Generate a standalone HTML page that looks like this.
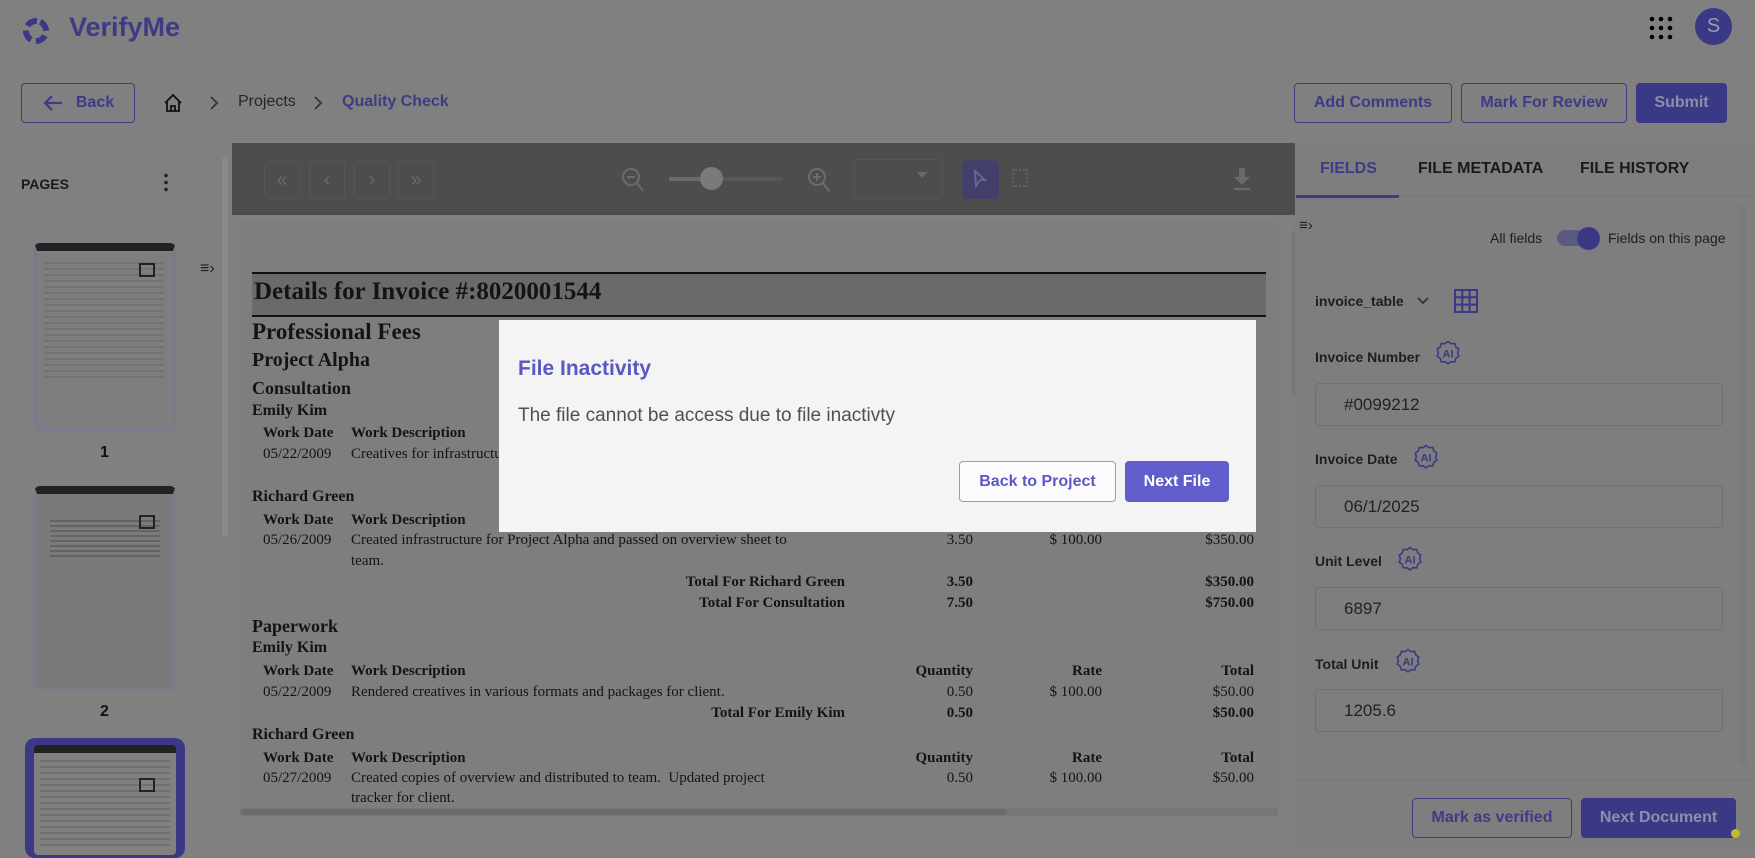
<!DOCTYPE html>
<html><head><meta charset="utf-8"><style>
*{box-sizing:border-box;margin:0;padding:0}
body{width:1755px;height:849px;overflow:hidden;background:#808080;font-family:"Liberation Sans",sans-serif;position:relative}
.a{position:absolute;white-space:nowrap}
.btn{position:absolute;border:1.5px solid #3f3d80;border-radius:4px;color:#3d3b86;font-weight:bold;font-size:16px;display:flex;align-items:center;justify-content:center}
.pbtn{background:#3b3985;color:#8e8eaa;border-color:#3b3985}
.s{font-family:"Liberation Serif",serif;color:#141414;position:absolute;white-space:nowrap;font-size:15px}
.b{font-weight:bold}
.r{text-align:right}
.tb{position:absolute;top:161px;width:36px;height:38px;border:1px solid #555;border-radius:4px;color:#6a6a6a;font-size:20px;display:flex;align-items:center;justify-content:center}
.lbl{position:absolute;font-size:14px;font-weight:bold;color:#1e1e1e;white-space:nowrap}
.inp{position:absolute;left:1315px;width:408px;height:43px;border:1px solid #707070;border-radius:4px;font-size:17px;color:#222;padding-left:28px;display:flex;align-items:center}
.ai{position:absolute;width:26px;height:26px}
</style></head><body>
<svg class="a" style="left:21px;top:15px" width="30" height="30" viewBox="0 0 30 30"><circle cx="15" cy="16" r="10" fill="none" stroke="#3b3985" stroke-width="6" stroke-dasharray="11 5" transform="rotate(-65 15 16)"/></svg>
<div class="a" style="left:69px;top:12px;font-size:27px;font-weight:bold;color:#3d3b86">VerifyMe</div>
<svg class="a" style="left:1649px;top:16px" width="24" height="24" viewBox="0 0 24 24" fill="#000"><circle cx="3" cy="3" r="2.3"/><circle cx="12" cy="3" r="2.3"/><circle cx="21" cy="3" r="2.3"/><circle cx="3" cy="12" r="2.3"/><circle cx="12" cy="12" r="2.3"/><circle cx="21" cy="12" r="2.3"/><circle cx="3" cy="21" r="2.3"/><circle cx="12" cy="21" r="2.3"/><circle cx="21" cy="21" r="2.3"/></svg>
<div class="a" style="left:1695px;top:8px;width:37px;height:37px;border-radius:50%;background:#3b3985;color:#9a9ab0;font-size:20px;display:flex;align-items:center;justify-content:center">S</div>

<div class="btn" style="left:21px;top:83px;width:114px;height:40px"><svg width="22" height="18" viewBox="0 0 22 18" fill="none" stroke="#3d3b86" stroke-width="2.2" style="margin-right:12px"><path d="M20 9H3M10 2L3 9l7 7"/></svg>Back</div>
<svg class="a" style="left:163px;top:93px" width="20" height="20" viewBox="0 0 20 20" fill="none" stroke="#111" stroke-width="1.8"><path d="M2 10 L10 2 L18 10 M4 8 V18 H16 V8 M8 18 V13 H12 V18"/></svg>
<svg class="a" style="left:209px;top:95px" width="10" height="16" viewBox="0 0 10 16" fill="none" stroke="#333" stroke-width="1.8"><path d="M2 2l6 6-6 6"/></svg>
<div class="a" style="left:238px;top:93px;font-size:16px;color:#262626">Projects</div>
<svg class="a" style="left:313px;top:95px" width="10" height="16" viewBox="0 0 10 16" fill="none" stroke="#333" stroke-width="1.8"><path d="M2 2l6 6-6 6"/></svg>
<div class="a" style="left:342px;top:93px;font-size:16px;color:#3d3b86;font-weight:bold">Quality Check</div>

<div class="btn" style="left:1294px;top:83px;width:158px;height:40px">Add Comments</div>
<div class="btn" style="left:1461px;top:83px;width:166px;height:40px">Mark For Review</div>
<div class="btn pbtn" style="left:1636px;top:83px;width:91px;height:40px">Submit</div>

<div class="a" style="left:21px;top:176px;font-size:14px;font-weight:bold;color:#1a1a1a">PAGES</div>
<div class="a" style="left:164px;top:172px;width:4px;height:20px;background:radial-gradient(circle,#222 1.6px,transparent 2px) 0 0/4px 7px"></div>
<div class="a" style="left:222px;top:157px;width:6px;height:380px;background:#8a8a8a;border-radius:3px"></div>
<div class="a" style="left:200px;top:260px;font-size:16px;color:#222">&#8801;&#8250;</div>
<div class="a" style="left:34px;top:243px;width:142px;height:188px;background:#7e7e80;border:3px solid #7a7a8c;border-top:8px solid #222;border-radius:6px"></div>
<div class="a" style="left:44px;top:262px;width:120px;height:120px;background:repeating-linear-gradient(#6e6e70 0 2px,transparent 2px 6px);opacity:.7"></div>
<div class="a" style="left:139px;top:263px;width:16px;height:14px;border:2px solid #222"></div>
<div class="a" style="left:100px;top:444px;font-size:16px;font-weight:bold;color:#111">1</div>
<div class="a" style="left:34px;top:486px;width:142px;height:204px;background:#7a7a7c;border:3px solid #7a7a8c;border-top:8px solid #222;border-radius:6px"></div>
<div class="a" style="left:50px;top:520px;width:110px;height:40px;background:repeating-linear-gradient(#555 0 2px,transparent 2px 5px);opacity:.6"></div>
<div class="a" style="left:139px;top:515px;width:16px;height:14px;border:2px solid #222"></div>
<div class="a" style="left:100px;top:703px;font-size:16px;font-weight:bold;color:#111">2</div>
<div class="a" style="left:25px;top:738px;width:160px;height:120px;background:#3b3985;border-radius:10px"></div>
<div class="a" style="left:34px;top:745px;width:142px;height:110px;background:#808080;border-top:8px solid #222;border-radius:4px"></div>
<div class="a" style="left:40px;top:760px;width:130px;height:90px;background:repeating-linear-gradient(#666 0 2px,transparent 2px 6px);opacity:.6"></div>
<div class="a" style="left:139px;top:778px;width:16px;height:14px;border:2px solid #222"></div>

<div class="a" style="left:232px;top:143px;width:1063px;height:72px;background:#4d4d4d"></div>
<div class="tb" style="left:264px">&#171;</div><div class="tb" style="left:309px">&#8249;</div><div class="tb" style="left:354px">&#8250;</div><div class="tb" style="left:398px">&#187;</div>
<svg class="a" style="left:620px;top:166px" width="26" height="28" viewBox="0 0 26 28" fill="none" stroke="#6c6c6c" stroke-width="2"><circle cx="11" cy="11" r="8"/><path d="M7 11h8M17 17l6 8"/></svg>
<div class="a" style="left:669px;top:177px;width:114px;height:4px;background:#575757;border-radius:2px"></div>
<div class="a" style="left:669px;top:177px;width:42px;height:4px;background:#6a6a6a"></div>
<div class="a" style="left:700px;top:167px;width:23px;height:23px;border-radius:50%;background:#7a7a7a"></div>
<svg class="a" style="left:806px;top:166px" width="26" height="28" viewBox="0 0 26 28" fill="none" stroke="#6c6c6c" stroke-width="2"><circle cx="11" cy="11" r="8"/><path d="M7 11h8M11 7v8M17 17l6 8"/></svg>
<div class="a" style="left:854px;top:159px;width:89px;height:40px;border:1px solid #555;border-radius:4px"></div>
<div class="a" style="left:917px;top:172px;border:5px solid transparent;border-top:6px solid #6a6a6a"></div>
<div class="a" style="left:962px;top:160px;width:37px;height:39px;background:#42406a;border-radius:6px"></div>
<svg class="a" style="left:972px;top:169px" width="16" height="20" viewBox="0 0 16 20" fill="none" stroke="#6868a0" stroke-width="1.8"><path d="M3 2 L13 11 L8 11 L4 17 Z"/></svg>
<div class="a" style="left:1012px;top:169px;width:16px;height:18px;border:2px dotted #626262"></div>
<svg class="a" style="left:1231px;top:166px" width="22" height="26" viewBox="0 0 22 26" fill="#6a6a6a"><path d="M8 2h6v9h5l-8 8-8-8h5z"/><rect x="3" y="22" width="16" height="2"/></svg>

<div class="a" style="left:240px;top:220px;width:1038px;height:590px;background:#7e7e7e"></div>
<div class="a" style="left:252px;top:272px;width:1014px;height:45px;background:#6a6a6a;border-top:2px solid #111;border-bottom:2px solid #111"></div>
<div class="s b" style="left:254px;top:278px;font-size:25px">Details for Invoice #:8020001544</div>
<div class="s b" style="left:252px;top:319px;font-size:23px">Professional Fees</div>
<div class="s b" style="left:252px;top:349px;font-size:20px">Project Alpha</div>
<div class="s b" style="left:252px;top:378px;font-size:18px">Consultation</div>
<div class="s b" style="left:252px;top:402px;font-size:16px">Emily Kim</div>
<div class="s b" style="left:263px;top:425px">Work Date</div><div class="s b" style="left:351px;top:425px">Work Description</div>
<div class="s" style="left:263px;top:446px">05/22/2009</div><div class="s" style="left:351px;top:446px">Creatives for infrastructure</div>
<div class="s b" style="left:252px;top:488px;font-size:16px">Richard Green</div>
<div class="s b" style="left:263px;top:512px">Work Date</div><div class="s b" style="left:351px;top:512px">Work Description</div>
<div class="s" style="left:263px;top:532px">05/26/2009</div><div class="s" style="left:351px;top:532px">Created infrastructure for Project Alpha and passed on overview sheet to</div>
<div class="s r" style="right:782px;top:532px">3.50</div><div class="s r" style="right:653px;top:532px">$ 100.00</div><div class="s r" style="right:501px;top:532px">$350.00</div>
<div class="s" style="left:351px;top:553px">team.</div>
<div class="s b r" style="right:910px;top:574px">Total For Richard Green</div><div class="s b r" style="right:782px;top:574px">3.50</div><div class="s b r" style="right:501px;top:574px">$350.00</div>
<div class="s b r" style="right:910px;top:595px">Total For Consultation</div><div class="s b r" style="right:782px;top:595px">7.50</div><div class="s b r" style="right:501px;top:595px">$750.00</div>
<div class="s b" style="left:252px;top:616px;font-size:18px">Paperwork</div>
<div class="s b" style="left:252px;top:639px;font-size:16px">Emily Kim</div>
<div class="s b" style="left:263px;top:663px">Work Date</div><div class="s b" style="left:351px;top:663px">Work Description</div>
<div class="s b r" style="right:782px;top:663px">Quantity</div><div class="s b r" style="right:653px;top:663px">Rate</div><div class="s b r" style="right:501px;top:663px">Total</div>
<div class="s" style="left:263px;top:684px">05/22/2009</div><div class="s" style="left:351px;top:684px">Rendered creatives in various formats and packages for client.</div>
<div class="s r" style="right:782px;top:684px">0.50</div><div class="s r" style="right:653px;top:684px">$ 100.00</div><div class="s r" style="right:501px;top:684px">$50.00</div>
<div class="s b r" style="right:910px;top:705px">Total For Emily Kim</div><div class="s b r" style="right:782px;top:705px">0.50</div><div class="s b r" style="right:501px;top:705px">$50.00</div>
<div class="s b" style="left:252px;top:726px;font-size:16px">Richard Green</div>
<div class="s b" style="left:263px;top:750px">Work Date</div><div class="s b" style="left:351px;top:750px">Work Description</div>
<div class="s b r" style="right:782px;top:750px">Quantity</div><div class="s b r" style="right:653px;top:750px">Rate</div><div class="s b r" style="right:501px;top:750px">Total</div>
<div class="s" style="left:263px;top:770px">05/27/2009</div><div class="s" style="left:351px;top:770px">Created copies of overview and distributed to team.&nbsp; Updated project</div>
<div class="s r" style="right:782px;top:770px">0.50</div><div class="s r" style="right:653px;top:770px">$ 100.00</div><div class="s r" style="right:501px;top:770px">$50.00</div>
<div class="s" style="left:351px;top:790px">tracker for client.</div>
<div class="a" style="left:240px;top:808px;width:1038px;height:8px;background:#777"></div>
<div class="a" style="left:241px;top:809px;width:766px;height:6px;background:#6a6a6a;border-radius:3px"></div>
<div class="a" style="left:1292px;top:230px;width:6px;height:165px;background:#777;border-radius:3px"></div>

<div class="a" style="left:1295px;top:143px;width:460px;height:706px;background:#7e7e7e"></div>
<div class="a" style="left:1320px;top:160px;font-size:16px;font-weight:bold;color:#3d3b86">FIELDS</div>
<div class="a" style="left:1418px;top:160px;font-size:16px;font-weight:bold;color:#1a1a1a">FILE METADATA</div>
<div class="a" style="left:1580px;top:160px;font-size:16px;font-weight:bold;color:#1a1a1a">FILE HISTORY</div>
<div class="a" style="left:1295px;top:196px;width:460px;height:1px;background:#777"></div>
<div class="a" style="left:1296px;top:195px;width:103px;height:3px;background:#3d3b86"></div>
<div class="a" style="left:1299px;top:217px;font-size:15px;color:#222">&#8801;&#8250;</div>
<div class="a" style="left:1490px;top:230px;font-size:14px;color:#1e1e1e">All fields</div>
<div class="a" style="left:1557px;top:230px;width:40px;height:16px;border-radius:8px;background:#5b5a80"></div>
<div class="a" style="left:1577px;top:227px;width:23px;height:23px;border-radius:50%;background:#3b3985"></div>
<div class="a" style="left:1608px;top:230px;font-size:14px;color:#1e1e1e">Fields on this page</div>
<div class="a" style="left:1740px;top:205px;width:6px;height:560px;background:#7a7a7a"></div>

<div class="lbl" style="left:1315px;top:293px">invoice_table</div>
<svg class="a" style="left:1416px;top:296px" width="14" height="10" viewBox="0 0 14 10" fill="none" stroke="#333" stroke-width="1.8"><path d="M2 2l5 5 5-5"/></svg>
<svg class="a" style="left:1454px;top:289px" width="24" height="24" viewBox="0 0 24 24" fill="none" stroke="#3b3985" stroke-width="2"><rect x="1" y="1" width="22" height="22"/><path d="M8.3 1v22M15.6 1v22M1 8.3h22M1 15.6h22"/></svg>

<div class="lbl" style="left:1315px;top:349px">Invoice Number</div>
<div class="inp" style="top:383px">#0099212</div>
<div class="lbl" style="left:1315px;top:451px">Invoice Date</div>
<div class="inp" style="top:485px">06/1/2025</div>
<div class="lbl" style="left:1315px;top:553px">Unit Level</div>
<div class="inp" style="top:587px">6897</div>
<div class="lbl" style="left:1315px;top:656px">Total Unit</div>
<div class="inp" style="top:689px">1205.6</div>
<svg width="0" height="0" style="position:absolute"><defs><g id="ai"><path d="M13 1.5l3 2.2 3.7-.2 1.1 3.5 3 2.2-1.2 3.5 1.2 3.5-3 2.2-1.1 3.5-3.7-.2-3 2.2-3-2.2-3.7.2-1.1-3.5-3-2.2 1.2-3.5-1.2-3.5 3-2.2 1.1-3.5 3.7.2z" fill="none" stroke="#3b3985" stroke-width="1.6"/><text x="13" y="17.5" text-anchor="middle" font-family="Liberation Sans" font-size="11" font-weight="bold" fill="#3b3985">AI</text></g></defs></svg>
<svg class="ai" style="left:1435px;top:340px" viewBox="0 0 26 26"><use href="#ai"/></svg>
<svg class="ai" style="left:1413px;top:444px" viewBox="0 0 26 26"><use href="#ai"/></svg>
<svg class="ai" style="left:1397px;top:546px" viewBox="0 0 26 26"><use href="#ai"/></svg>
<svg class="ai" style="left:1395px;top:648px" viewBox="0 0 26 26"><use href="#ai"/></svg>

<div class="a" style="left:1296px;top:779px;width:459px;height:1px;background:#777"></div>
<div class="btn" style="left:1412px;top:798px;width:160px;height:40px">Mark as verified</div>
<div class="btn pbtn" style="left:1581px;top:798px;width:155px;height:40px">Next Document</div>
<div class="a" style="left:1731px;top:829px;width:9px;height:9px;border-radius:50%;background:#c8b830"></div>

<div class="a" style="left:499px;top:320px;width:757px;height:212px;background:#f4f4f4"></div>
<div class="a" style="left:518px;top:357px;font-size:21px;font-weight:bold;color:#5c58c2">File Inactivity</div>
<div class="a" style="left:518px;top:405px;font-size:19px;color:#505050">The file cannot be access due to file inactivty</div>
<div class="a" style="left:959px;top:461px;width:157px;height:41px;border:1.5px solid #9a97d6;border-radius:4px;background:#fbfbfd;color:#5c58c2;font-weight:bold;font-size:16px;display:flex;align-items:center;justify-content:center">Back to Project</div>
<div class="a" style="left:1125px;top:461px;width:104px;height:41px;border-radius:4px;background:#615dcb;color:#fff;font-weight:bold;font-size:16px;display:flex;align-items:center;justify-content:center">Next File</div>
</body></html>
